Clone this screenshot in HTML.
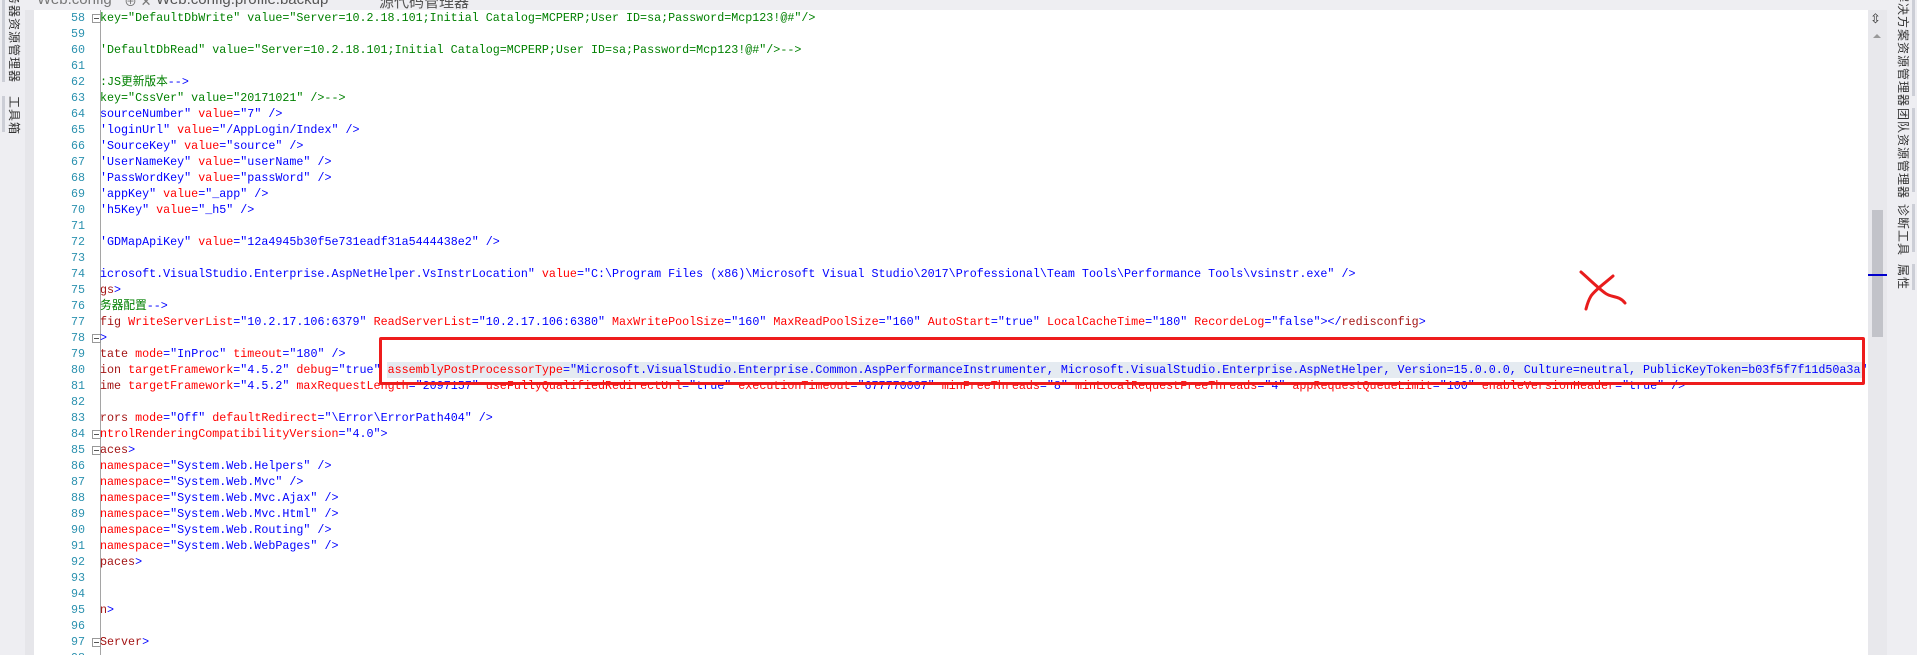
<!DOCTYPE html>
<html><head><meta charset="utf-8"><style>
html,body{margin:0;padding:0;width:1917px;height:655px;overflow:hidden;background:#fff;position:relative;font-family:"Liberation Sans","Noto Sans CJK SC",sans-serif}
.abs{position:absolute}
.code{position:absolute;left:100px;white-space:pre;font-family:"Liberation Mono","Noto Sans CJK SC",monospace;font-size:11.7px;line-height:16px;height:16px;color:#0000ff}
.ln{position:absolute;left:50px;width:35px;text-align:right;font-family:"Liberation Mono",monospace;font-size:11.7px;line-height:16px;color:#2b91af}
.c{color:#008000}.e{color:#a31515}.a{color:#ff0000}.k{color:#000}
.fold{position:absolute;left:92px;width:7px;height:7px;border:1px solid #999;background:#fff}
.fold:after{content:"";position:absolute;left:1px;top:3px;width:5px;height:1px;background:#555}
.vt{position:absolute;writing-mode:vertical-rl;text-orientation:sideways;font-size:12px;color:#333;letter-spacing:1px;white-space:nowrap}
</style></head><body>
<!-- top tab bar -->
<div class="abs" style="left:0;top:0;width:1917px;height:10px;background:#eeeef2"></div>
<div class="abs" style="left:37px;top:-9px;font-size:15px;color:#777">Web.config</div>
<div class="abs" style="left:124px;top:-9px;font-size:13px;color:#777">⊕ ✕</div>
<div class="abs" style="left:156px;top:-9px;font-size:15px;color:#555">Web.config.profile.backup</div>
<div class="abs" style="left:379px;top:-9px;font-size:15px;color:#555">源代码管理器</div>
<!-- left panel -->
<div class="abs" style="left:0;top:0;width:25px;height:655px;background:#eeeef2"></div>
<div class="abs" style="left:25px;top:10px;width:9px;height:645px;background:#e6e6ea"></div>
<div class="abs" style="left:2px;top:0;width:3px;height:82px;background:#ccced6"></div>
<div class="abs" style="left:2px;top:96px;width:3px;height:36px;background:#ccced6"></div>
<div class="vt" style="left:6px;top:-8px">务器资源管理器</div>
<div class="vt" style="left:6px;top:96px">工具箱</div>
<!-- fold margin line -->
<div class="abs" style="left:100px;top:10px;width:1px;height:645px;background:#a5a5a5"></div>
<!-- scrollbar -->
<div class="abs" style="left:1868px;top:10px;width:19px;height:645px;background:#e8e8ec"></div>
<div class="abs" style="left:1870px;top:11px;font-size:13px;color:#333">⇳</div>
<div class="abs" style="left:1873px;top:34px;width:0;height:0;border-left:4px solid transparent;border-right:4px solid transparent;border-bottom:4px solid #999"></div>
<div class="abs" style="left:1872px;top:210px;width:11px;height:127px;background:#c2c3c9"></div>
<div class="abs" style="left:1868px;top:274px;width:19px;height:2px;background:#0000cc"></div>
<!-- right panel -->
<div class="abs" style="left:1887px;top:0;width:30px;height:655px;background:#eeeef2"></div>
<div class="abs" style="left:1912px;top:0;width:3px;height:96px;background:#ccced6"></div>
<div class="abs" style="left:1912px;top:108px;width:3px;height:84px;background:#ccced6"></div>
<div class="abs" style="left:1912px;top:204px;width:3px;height:48px;background:#ccced6"></div>
<div class="abs" style="left:1912px;top:264px;width:3px;height:26px;background:#ccced6"></div>
<div class="vt" style="left:1895px;top:-10px">解决方案资源管理器</div>
<div class="vt" style="left:1895px;top:108px">团队资源管理器</div>
<div class="vt" style="left:1895px;top:204px">诊断工具</div>
<div class="vt" style="left:1895px;top:264px">属性</div>

<!-- selection highlight -->
<div class="abs" style="left:387px;top:362px;width:1478px;height:16px;background:#e5ebf1"></div>

<!-- line numbers -->
<div class="ln" style="top:10px">58</div><div class="ln" style="top:26px">59</div><div class="ln" style="top:42px">60</div><div class="ln" style="top:58px">61</div><div class="ln" style="top:74px">62</div><div class="ln" style="top:90px">63</div><div class="ln" style="top:106px">64</div><div class="ln" style="top:122px">65</div><div class="ln" style="top:138px">66</div><div class="ln" style="top:154px">67</div><div class="ln" style="top:170px">68</div><div class="ln" style="top:186px">69</div><div class="ln" style="top:202px">70</div><div class="ln" style="top:218px">71</div><div class="ln" style="top:234px">72</div><div class="ln" style="top:250px">73</div><div class="ln" style="top:266px">74</div><div class="ln" style="top:282px">75</div><div class="ln" style="top:298px">76</div><div class="ln" style="top:314px">77</div><div class="ln" style="top:330px">78</div><div class="ln" style="top:346px">79</div><div class="ln" style="top:362px">80</div><div class="ln" style="top:378px">81</div><div class="ln" style="top:394px">82</div><div class="ln" style="top:410px">83</div><div class="ln" style="top:426px">84</div><div class="ln" style="top:442px">85</div><div class="ln" style="top:458px">86</div><div class="ln" style="top:474px">87</div><div class="ln" style="top:490px">88</div><div class="ln" style="top:506px">89</div><div class="ln" style="top:522px">90</div><div class="ln" style="top:538px">91</div><div class="ln" style="top:554px">92</div><div class="ln" style="top:570px">93</div><div class="ln" style="top:586px">94</div><div class="ln" style="top:602px">95</div><div class="ln" style="top:618px">96</div><div class="ln" style="top:634px">97</div><div class="ln" style="top:650px">98</div>

<!-- fold markers -->
<div class="fold" style="top:14px"></div><div class="fold" style="top:334px"></div><div class="fold" style="top:430px"></div><div class="fold" style="top:446px"></div><div class="fold" style="top:638px"></div>

<!-- code -->
<div class="code c" style="top:10px">key="DefaultDbWrite" value="Server=10.2.18.101;Initial Catalog=MCPERP;User ID=sa;Password=Mcp123!@#"/&gt;</div>
<div class="code c" style="top:42px">'DefaultDbRead" value="Server=10.2.18.101;Initial Catalog=MCPERP;User ID=sa;Password=Mcp123!@#"/&gt;--&gt;</div>
<div class="code" style="top:74px"><span class="c">:JS更新版本</span>--&gt;</div>
<div class="code c" style="top:90px">key="CssVer" value="20171021" /&gt;--&gt;</div>
<div class="code" style="top:106px">sourceNumber" <span class="a">value</span>="7" /&gt;</div>
<div class="code" style="top:122px">'loginUrl" <span class="a">value</span>="/AppLogin/Index" /&gt;</div>
<div class="code" style="top:138px">'SourceKey" <span class="a">value</span>="source" /&gt;</div>
<div class="code" style="top:154px">'UserNameKey" <span class="a">value</span>="userName" /&gt;</div>
<div class="code" style="top:170px">'PassWordKey" <span class="a">value</span>="passWord" /&gt;</div>
<div class="code" style="top:186px">'appKey" <span class="a">value</span>="_app" /&gt;</div>
<div class="code" style="top:202px">'h5Key" <span class="a">value</span>="_h5" /&gt;</div>
<div class="code" style="top:234px">'GDMapApiKey" <span class="a">value</span>="12a4945b30f5e731eadf31a5444438e2" /&gt;</div>
<div class="code" style="top:266px">icrosoft.VisualStudio.Enterprise.AspNetHelper.VsInstrLocation" <span class="a">value</span>="C:\Program Files (x86)\Microsoft Visual Studio\2017\Professional\Team Tools\Performance Tools\vsinstr.exe" /&gt;</div>
<div class="code" style="top:282px"><span class="e">gs</span>&gt;</div>
<div class="code" style="top:298px"><span class="c">务器配置</span>--&gt;</div>
<div class="code" style="top:314px"><span class="e">fig</span> <span class="a">WriteServerList</span>="10.2.17.106:6379" <span class="a">ReadServerList</span>="10.2.17.106:6380" <span class="a">MaxWritePoolSize</span>="160" <span class="a">MaxReadPoolSize</span>="160" <span class="a">AutoStart</span>="true" <span class="a">LocalCacheTime</span>="180" <span class="a">RecordeLog</span>="false"&gt;&lt;/<span class="e">redisconfig</span>&gt;</div>
<div class="code" style="top:330px">&gt;</div>
<div class="code" style="top:346px"><span class="e">tate</span> <span class="a">mode</span>="InProc" <span class="a">timeout</span>="180" /&gt;</div>
<div class="code" style="top:362px"><span class="e">ion</span> <span class="a">targetFramework</span>="4.5.2" <span class="a">debug</span>="true" <span class="a">assemblyPostProcessorType</span>="Microsoft.VisualStudio.Enterprise.Common.AspPerformanceInstrumenter, Microsoft.VisualStudio.Enterprise.AspNetHelper, Version=15.0.0.0, Culture=neutral, PublicKeyToken=b03f5f7f11d50a3a"</div>
<div class="code" style="top:378px"><span class="e">ime</span> <span class="a">targetFramework</span>="4.5.2" <span class="a">maxRequestLength</span>="2097157" <span class="a">useFullyQualifiedRedirectUrl</span>="true" <span class="a">executionTimeout</span>="677770007" <span class="a">minFreeThreads</span>="8" <span class="a">minLocalRequestFreeThreads</span>="4" <span class="a">appRequestQueueLimit</span>="100" <span class="a">enableVersionHeader</span>="true" /&gt;</div>
<div class="code" style="top:410px"><span class="e">rors</span> <span class="a">mode</span>="Off" <span class="a">defaultRedirect</span>="\Error\ErrorPath404" /&gt;</div>
<div class="code" style="top:426px"><span class="a">ntrolRenderingCompatibilityVersion</span>="4.0"&gt;</div>
<div class="code" style="top:442px"><span class="e">aces</span>&gt;</div>
<div class="code" style="top:458px"><span class="a">namespace</span>="System.Web.Helpers" /&gt;</div>
<div class="code" style="top:474px"><span class="a">namespace</span>="System.Web.Mvc" /&gt;</div>
<div class="code" style="top:490px"><span class="a">namespace</span>="System.Web.Mvc.Ajax" /&gt;</div>
<div class="code" style="top:506px"><span class="a">namespace</span>="System.Web.Mvc.Html" /&gt;</div>
<div class="code" style="top:522px"><span class="a">namespace</span>="System.Web.Routing" /&gt;</div>
<div class="code" style="top:538px"><span class="a">namespace</span>="System.Web.WebPages" /&gt;</div>
<div class="code" style="top:554px"><span class="e">paces</span>&gt;</div>
<div class="code" style="top:602px"><span class="e">n</span>&gt;</div>
<div class="code" style="top:634px"><span class="e">Server</span>&gt;</div>

<!-- red box -->
<div class="abs" style="left:379px;top:337px;width:1480px;height:42px;border:3px solid #ee1c1c;border-radius:2px"></div>
<!-- red X -->
<svg class="abs" style="left:1575px;top:265px" width="60" height="50" viewBox="0 0 60 50">
<path d="M6 7 C14 14 22 22 30 28 C36 33 44 30 50 38" stroke="#e81c1c" stroke-width="3" fill="none" stroke-linecap="round"/>
<path d="M38 11 C30 18 20 25 16 31 C13 36 12 40 11 44" stroke="#e81c1c" stroke-width="3" fill="none" stroke-linecap="round"/>
</svg>
</body></html>
